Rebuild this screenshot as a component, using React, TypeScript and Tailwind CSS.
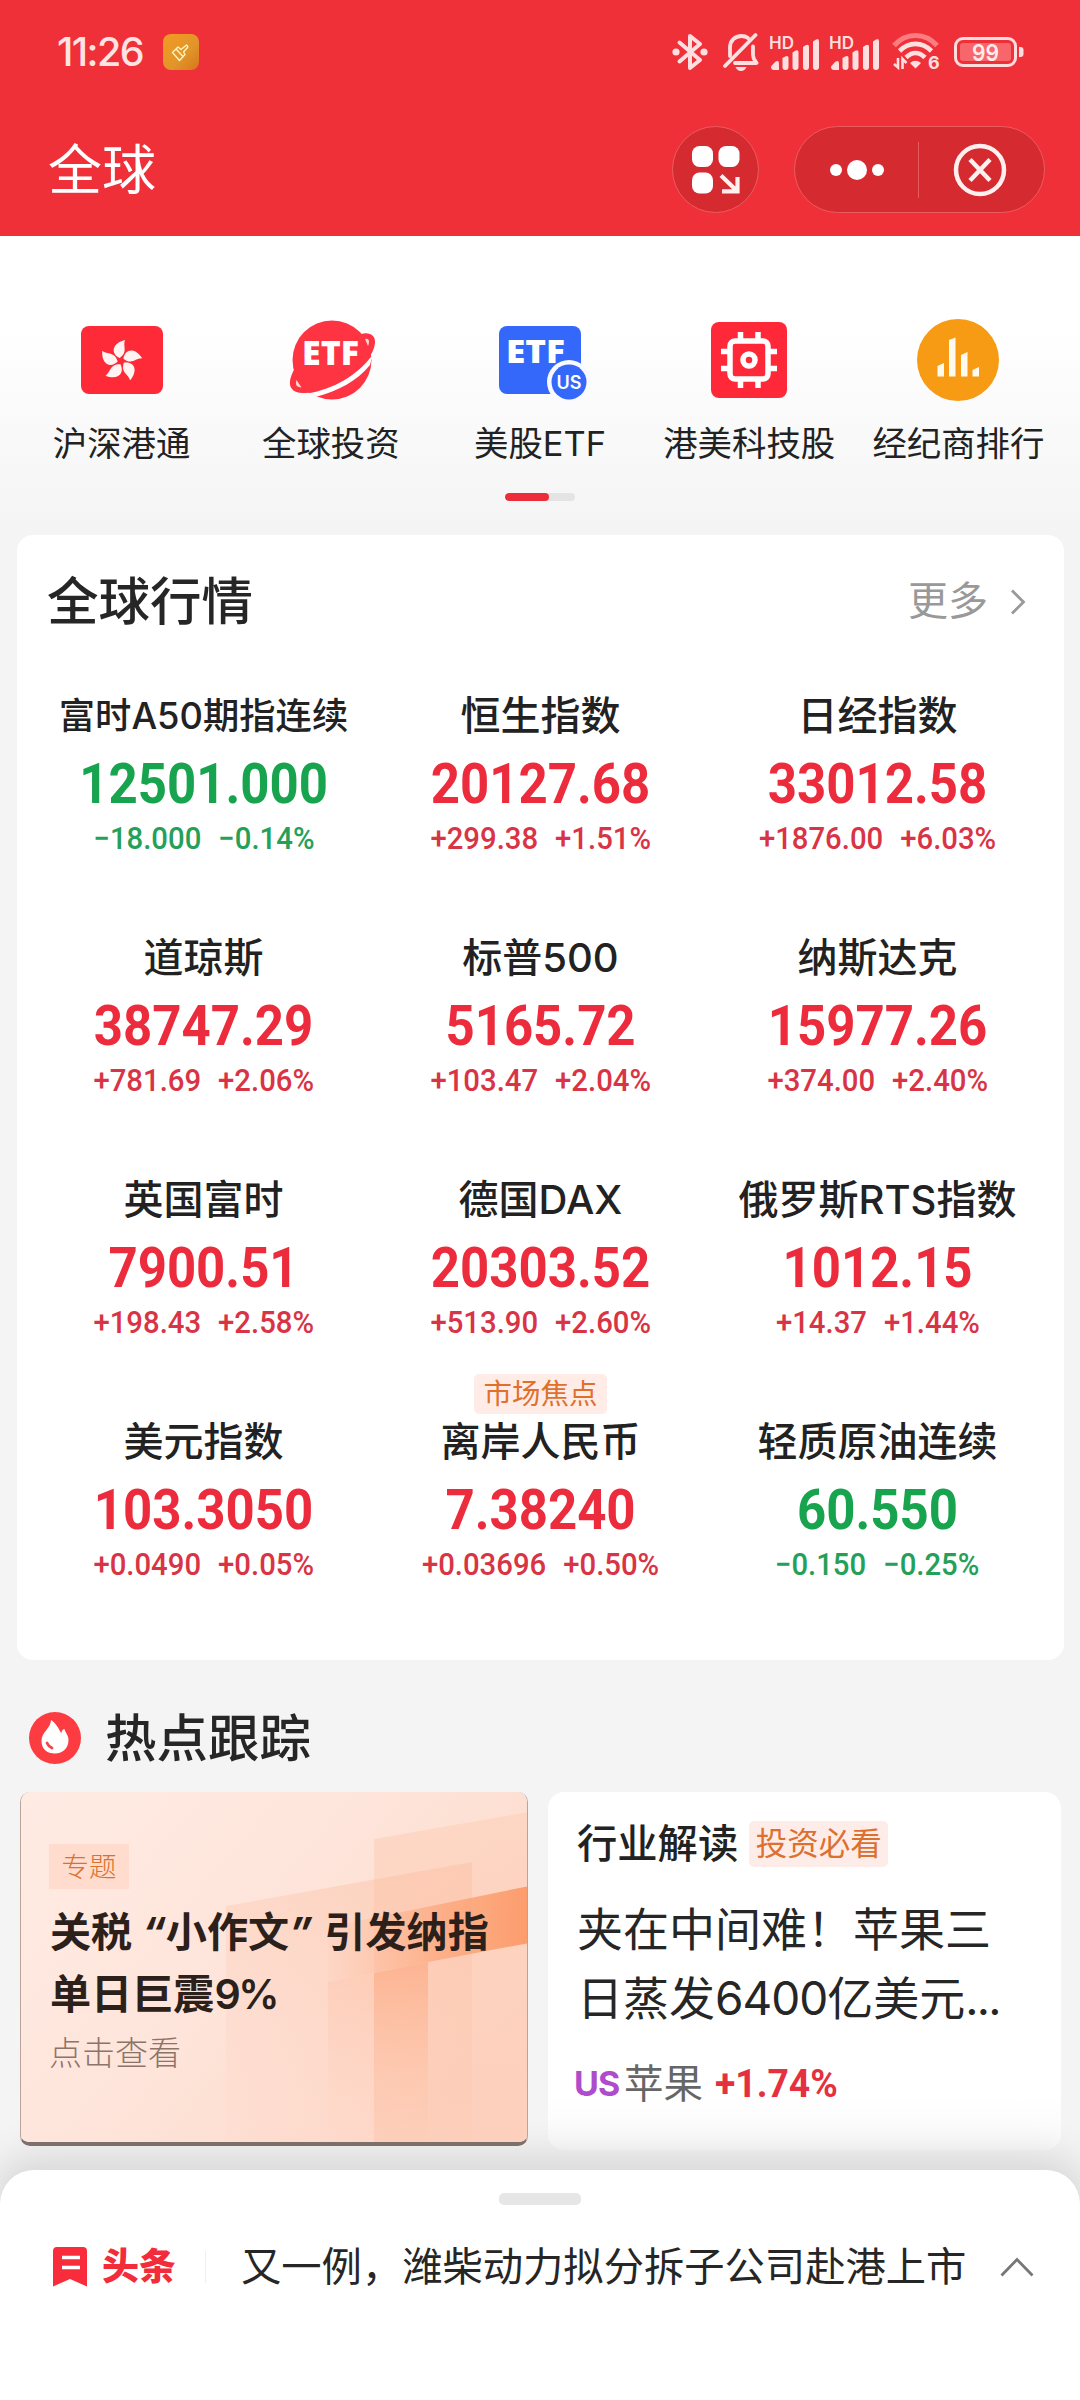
import React from "react";

type Quote = {
  name: string;
  price: string;
  diff: string;
  pct: string;
  down?: boolean;
  small?: boolean;
  tag?: string;
};

const quotes: Quote[] = [
  { name: "富时A50期指连续", price: "12501.000", diff: "-18.000", pct: "-0.14%", down: true, small: true },
  { name: "恒生指数", price: "20127.68", diff: "+299.38", pct: "+1.51%" },
  { name: "日经指数", price: "33012.58", diff: "+1876.00", pct: "+6.03%" },
  { name: "道琼斯", price: "38747.29", diff: "+781.69", pct: "+2.06%" },
  { name: "标普500", price: "5165.72", diff: "+103.47", pct: "+2.04%" },
  { name: "纳斯达克", price: "15977.26", diff: "+374.00", pct: "+2.40%" },
  { name: "英国富时", price: "7900.51", diff: "+198.43", pct: "+2.58%" },
  { name: "德国DAX", price: "20303.52", diff: "+513.90", pct: "+2.60%" },
  { name: "俄罗斯RTS指数", price: "1012.15", diff: "+14.37", pct: "+1.44%" },
  { name: "美元指数", price: "103.3050", diff: "+0.0490", pct: "+0.05%" },
  { name: "离岸人民币", price: "7.38240", diff: "+0.03696", pct: "+0.50%", tag: "市场焦点" },
  { name: "轻质原油连续", price: "60.550", diff: "-0.150", pct: "-0.25%", down: true },
];

function BluetoothIcon() {
  return (
    <svg width="36" height="40" viewBox="0 0 36 40" fill="none" stroke="#ffdedf" strokeWidth="4" strokeLinejoin="round" strokeLinecap="round">
      <path d="M7.500 10.500 28 28 18 36V4l10 8L7.500 29.500" />
      <circle cx="4" cy="20" r="3.600" fill="#ffdedf" stroke="none" />
      <circle cx="32" cy="20" r="3.600" fill="#ffdedf" stroke="none" />
    </svg>
  );
}

function BellOffIcon() {
  return (
    <svg width="36" height="40" viewBox="0 0 36 40" fill="none" stroke="#ffdedf" strokeWidth="3.800" strokeLinecap="round">
      <path d="M7 24V15.500C7 8.500 12 4 18.500 4c2.500 0 4.800.700 6.500 2" />
      <path d="M30 14.500v8.500c0 3.500 1.500 5 3.500 8H12" strokeLinejoin="round" />
      <path d="M32.500 3 2 34" />
      <path d="M12.500 35h11c-1.200 2.600-3 4-5.500 4s-4.300-1.400-5.500-4z" fill="#ffdedf" stroke="none" />
    </svg>
  );
}

function SignalIcon() {
  return (
    <svg width="52" height="40" viewBox="-2 -4 52 40" fill="#ffdedf">
      <text x="-1" y="12.500" textLength="25" lengthAdjust="spacingAndGlyphs" fontFamily="Inter, sans-serif" fontSize="17" fontWeight="600">HD</text>
      <path d="M1 30.500 5 26q4-2.500 4 1.500V34H4q-3 0-3-3.500z" />
      <path d="M12.500 22q6-4 6 0v9q0 3-3 3t-3-3z" />
      <path d="M22.500 16.500q6-4.500 6 0V31q0 3-3 3t-3-3z" />
      <path d="M33 11q6-4.500 6 0v20q0 3-3 3t-3-3z" />
      <path d="M43 5.500q6-5 6 0V31q0 3-3 3t-3-3z" />
    </svg>
  );
}

function WifiIcon() {
  return (
    <svg width="50" height="40" viewBox="0 0 50 40" fill="none" stroke="#ffe0e1" strokeWidth="4.600">
      <path d="M2 13.500C14 0 33 0 45 13.500" stroke="#fc7d80" strokeWidth="5" />
      <path d="M7.500 19C17 9.500 30 9.500 39.500 19" />
      <path d="M14 25.500c6-6 13-6 19 0" />
      <path d="M18 31q5.500-4.500 11 0l-5.500 5.500z" fill="#ffe0e1" stroke="none" />
      <path d="M6 26v9.500L2 32M10.500 37V27l4 4" strokeWidth="2.600" />
      <text x="36" y="36.500" fill="#ffe0e1" stroke="none" fontFamily="Inter, sans-serif" fontSize="18" fontWeight="700">6</text>
    </svg>
  );
}

function BatteryIcon() {
  return (
    <svg width="70" height="30" viewBox="0 0 70 30">
      <rect x="1.500" y="1.500" width="60" height="27" rx="7.500" fill="none" stroke="#ffdcdd" strokeWidth="3" />
      <rect x="6" y="6" width="51" height="18" rx="3" fill="#f7666a" />
      <path d="M65 10h1.500q3 0 3 3v4q0 3-3 3H65z" fill="#ffdcdd" />
      <text x="31.500" y="23.500" textAnchor="middle" textLength="27" lengthAdjust="spacingAndGlyphs" fontFamily="Inter, sans-serif" fontSize="23" fontWeight="600" fill="#ffeaea">99</text>
    </svg>
  );
}

function Header() {
  return (
    <header className="h-[236px] shrink-0 bg-[#ef3038] text-white">
      <div className="flex h-[104px] items-center pl-[57px] pr-[56px]">
        <span className="w-[106px] text-[39.5px] font-medium leading-[40px] tracking-[-1.6px] text-[#ffe3e4]">11:26</span>
        <svg width="36" height="36" viewBox="0 0 36 36">
          <defs>
            <linearGradient id="clean" x1="0" y1="0" x2="1" y2="1">
              <stop offset="0" stopColor="#f49a24" />
              <stop offset="0.6" stopColor="#e0952a" />
              <stop offset="1" stopColor="#d8751c" />
            </linearGradient>
          </defs>
          <rect width="36" height="36" rx="8" fill="url(#clean)" />
          <path d="M9.500 18.500 15 13l3 2.500 5.500-4.500q1.800 1 1 2.500L20.500 18l1.500 2.500-5.500 6zM13 15l7 7.500" fill="none" stroke="#fff4bd" strokeWidth="1.400" strokeLinejoin="round" />
        </svg>
        <div className="ml-auto flex items-center gap-[15px]">
          <BluetoothIcon />
          <BellOffIcon />
        </div>
        <div className="ml-[9px] flex items-center gap-[8px]">
          <SignalIcon />
          <SignalIcon />
        </div>
        <div className="ml-[12px] flex items-center gap-[12px]">
          <WifiIcon />
          <BatteryIcon />
        </div>
      </div>
      <div className="flex h-[131px] items-center pl-[48px] pr-[35px]">
        <h1 className="pt-[2px] text-[54px] font-normal leading-[60px]">全球</h1>
        <button className="ml-auto flex size-[87px] items-center justify-center rounded-full border border-[#ec5b60] bg-[#d42a30]">
          <svg width="48" height="48" viewBox="0 0 48 48" fill="#fff">
            <rect width="21" height="21" rx="7.500" />
            <rect x="26.500" width="21" height="21" rx="7.500" />
            <rect y="26.500" width="21" height="21" rx="7.500" />
            <path d="M29 29.500 45 45M30 45.300H45.500V31" fill="none" stroke="#fff0ef" strokeWidth="4.200" />
          </svg>
        </button>
        <div className="ml-[35px] flex h-[87px] w-[251px] items-center rounded-full border border-[#ec5b60] bg-[#d42a30]">
          <div className="flex w-[123px] items-center justify-center gap-[5px] pl-[1px]">
            <i className="size-[12px] rounded-full bg-white" />
            <i className="size-[20px] rounded-full bg-white" />
            <i className="size-[12px] rounded-full bg-white" />
          </div>
          <i className="h-[56px] w-px bg-[#e75b60]" />
          <svg width="54" height="54" viewBox="0 0 54 54" fill="none" stroke="#fff0ef" strokeWidth="4.500" className="ml-[34px]">
            <circle cx="27" cy="27" r="24" />
            <path d="M17 16.500 37 37.500M37 16.500 17 37.500" />
          </svg>
        </div>
      </div>
    </header>
  );
}

function FlagIcon() {
  return (
    <svg width="90" height="84" viewBox="0 0 90 84">
      <rect x="4" y="8" width="82" height="68" rx="8" fill="#ff2a37" />
      <g transform="translate(44 43)" fill="#fff4f2">
        {[0, 72, 144, 216, 288].map((a) => (
          <path key={a} transform={`rotate(${a})`} d="M-1.500-3C-11-8-8.500-18 4-21 1.500-15 7.500-9-1.500-3z" />
        ))}
      </g>
    </svg>
  );
}

function GlobeIcon() {
  return (
    <svg width="90" height="84" viewBox="0 0 90 84">
      <circle cx="46" cy="42" r="39.500" fill="#fe3443" />
      <path d="M70 18C81 12 90 16 89 25 87 48 44 77 16 75 2 74 1 64 9 50z" fill="#fe3443" />
      <path d="M79 21c4-1 5 2.500 3 7z" fill="#ffd6cf" />
      <path d="M10.500 62c-1.500 5 0 7 5 7.500z" fill="#ffd6cf" />
      <path d="M22 75.500C47 71 71 58 86.500 37L84 47C71 63 52 73 31 78.500z" fill="#fff" />
      <text x="16" y="46.500" textLength="57" lengthAdjust="spacingAndGlyphs" fontFamily="'Open Sans', sans-serif" fontSize="33" fontWeight="800" fill="#fff">ETF</text>
    </svg>
  );
}

function UsEtfIcon() {
  return (
    <svg width="96" height="84" viewBox="0 0 96 84" className="-mr-[6px]">
      <rect x="4" y="8" width="82" height="68" rx="8" fill="#3468fa" />
      <text x="11" y="45" textLength="59" lengthAdjust="spacingAndGlyphs" fontFamily="'Open Sans', sans-serif" fontSize="32.500" fontWeight="800" fill="#fff">ETF</text>
      <circle cx="74" cy="64" r="22" fill="#f8faff" />
      <circle cx="74" cy="64" r="17.500" fill="#3468fa" />
      <text x="74" y="70.500" textAnchor="middle" fontFamily="Inter, sans-serif" fontSize="18" fontWeight="600" fill="#fff">US</text>
    </svg>
  );
}

function ChipIcon() {
  return (
    <svg width="90" height="84" viewBox="0 0 90 84">
      <rect x="7" y="4" width="76" height="76" rx="8" fill="#ff2838" />
      <g fill="none" stroke="#fff" strokeWidth="5.500">
        <rect x="26" y="23" width="38" height="38" rx="5" />
        <circle cx="45" cy="42" r="6" />
        <path d="M36.500 14v9M54 14v9M36.500 61v9M54 61v9M17 33.500h9M17 50.500h9M64 33.500h9M64 50.500h9" />
      </g>
    </svg>
  );
}

function RankIcon() {
  return (
    <svg width="90" height="84" viewBox="0 0 90 84">
      <circle cx="45" cy="42" r="41" fill="#f79a14" />
      <path d="M24.500 48l6.500-3v13.500h-6.500zM36 22l6.500-2.500v39H36zM48 37l6.500-3v24.500H48zM59.500 52l6.500-3v9.500h-6.500z" fill="#fffaf0" />
    </svg>
  );
}

const entries = [
  { label: "沪深港通", icon: <FlagIcon /> },
  { label: "全球投资", icon: <GlobeIcon /> },
  { label: "美股ETF", icon: <UsEtfIcon /> },
  { label: "港美科技股", icon: <ChipIcon /> },
  { label: "经纪商排行", icon: <RankIcon /> },
];

function Entries() {
  return (
    <nav className="h-[299px] shrink-0 bg-linear-to-b from-white from-30% to-[#f4f4f4] px-[17px] pt-[82px]">
      <div className="grid grid-cols-5">
        {entries.map((e) => (
          <div key={e.label} className="flex flex-col items-center">
            {e.icon}
            <span className="mt-[22px] whitespace-nowrap text-[34.4px] leading-[40px] text-[#222]">{e.label}</span>
          </div>
        ))}
      </div>
      <div className="mx-auto mt-[29px] h-[8px] w-[70px] overflow-hidden rounded-full bg-[#e4e4e4]">
        <div className="h-full w-[44px] rounded-full bg-[#ec2c3a]" />
      </div>
    </nav>
  );
}

function QuoteCell({ q }: { q: Quote }) {
  const tone = q.down ? "text-[#18a34f]" : "text-[#ec2c3d]";
  const sub = q.down ? "text-[#25a058]" : "text-[#d93445]";
  return (
    <div className="relative flex h-[242px] flex-col items-center">
      {q.tag && (
        <span className="absolute -top-[43px] flex h-[40px] w-[133px] items-center justify-center rounded-[5px] bg-[#ffece6] text-[28.500px] leading-[36px] text-[#e0702c]">
          {q.tag}
        </span>
      )}
      <span className={`whitespace-nowrap font-medium leading-[50px] text-[#222] ${q.small ? "text-[36.300px]" : "text-[40px]"}`}>{q.name}</span>
      <span className={`mt-[13px] block origin-center scale-x-[0.91] font-['Roboto'] text-[56px] font-bold leading-[60px] ${tone}`}>{q.price}</span>
      <span className={`mt-[7px] flex scale-x-[0.945] gap-[18px] whitespace-nowrap font-['Roboto'] text-[31px] font-medium leading-[36px] ${sub}`}>
        <span>{q.diff.replace("-", "−")}</span>
        <span>{q.pct.replace("-", "−")}</span>
      </span>
    </div>
  );
}

function Markets() {
  return (
    <section className="mx-[17px] h-[1125px] w-[1047px] shrink-0 rounded-[16px] bg-white px-[18px] pt-[36px]">
      <div className="flex h-[60px] items-center justify-between pl-[12px] pr-[20px]">
        <h2 className="text-[51.500px] font-medium leading-[60px] text-[#262626]">全球行情</h2>
        <span className="flex items-center text-[40px] font-normal leading-[50px] text-[#999]">
          更多
          <svg width="16" height="26" viewBox="0 0 16 26" fill="none" stroke="#999" strokeWidth="2.800" className="ml-[22px] mt-[2px]">
            <path d="M2 1.500 13.500 13 2 24.500" />
          </svg>
        </span>
      </div>
      <div className="mt-[60px] grid grid-cols-3">
        {quotes.map((q) => (
          <QuoteCell key={q.name} q={q} />
        ))}
      </div>
    </section>
  );
}

function TopicArt() {
  return (
    <svg width="508" height="353" viewBox="0 0 508 353" className="absolute inset-0">
      <defs>
        <linearGradient id="base" x1="0" y1="0" x2="1" y2="0.600">
          <stop offset="0" stopColor="#ffebe3" />
          <stop offset="0.500" stopColor="#fee5db" />
          <stop offset="1" stopColor="#fdd9ca" />
        </linearGradient>
        <linearGradient id="pa" x1="0" y1="0" x2="0" y2="1">
          <stop offset="0" stopColor="#fdceb7" stopOpacity="0.550" />
          <stop offset="1" stopColor="#fcc5ab" stopOpacity="0.450" />
        </linearGradient>
        <linearGradient id="pb" x1="0.200" y1="0" x2="0" y2="1">
          <stop offset="0" stopColor="#fcb898" stopOpacity="0.350" />
          <stop offset="1" stopColor="#fdc8b2" stopOpacity="0.030" />
        </linearGradient>
        <linearGradient id="pc" x1="0" y1="0" x2="1" y2="0">
          <stop offset="0" stopColor="#fdb592" stopOpacity="0.050" />
          <stop offset="0.550" stopColor="#fca67a" stopOpacity="0.750" />
          <stop offset="1" stopColor="#fc9c6c" />
        </linearGradient>
        <linearGradient id="pd" x1="0" y1="0" x2="0" y2="1">
          <stop offset="0" stopColor="#fca77e" stopOpacity="0.650" />
          <stop offset="1" stopColor="#fdc0a4" stopOpacity="0.050" />
        </linearGradient>
      </defs>
      <rect width="508" height="353" fill="url(#base)" />
      <path d="M353 47 508 20V353H353z" fill="url(#pa)" />
      <path d="M205 114 451 70V353H205z" fill="url(#pb)" />
      <path d="M307 135 508 94V151L407 170 307 190z" fill="url(#pc)" />
      <path d="M307 190 353 181V353H307z" fill="url(#pd)" opacity="0.300" />
      <path d="M353 181 407 170V353H353z" fill="url(#pd)" />
    </svg>
  );
}

function Hot() {
  return (
    <section className="shrink-0">
      <div className="flex h-[132px] items-center pl-[29px] pt-[24px]">
        <svg width="52" height="52" viewBox="0 0 52 52">
          <circle cx="26" cy="26" r="26" fill="#fc3c41" />
          <path d="M22 8c0 8-9.500 12-9.500 21C12.500 37 18 41.500 26 41.500S39.500 36 39.500 28c0-5-3-7-4-11-2 .500-3 2-3.200 4.500C30 17 27 11 22 8z" fill="#fff" />
          <path d="M18 31c1 2.500 3 4 5 5" stroke="#f0474a" strokeWidth="2.800" fill="none" strokeLinecap="round" />
        </svg>
        <h2 className="ml-[24px] text-[51.500px] font-medium leading-[60px] text-[#262626]">热点跟踪</h2>
      </div>
      <div className="flex items-start pl-[20px]">
        <article className="relative h-[354px] w-[508px] overflow-hidden rounded-[10px] border-x border-b-4 border-x-[#b9a39a] border-b-[#7d706a]">
          <TopicArt />
          <div className="relative flex flex-col items-start pl-[28px] pt-[52px]">
            <span className="flex h-[45px] w-[80px] items-center justify-center bg-[#ffdccd] text-[27.500px] font-light leading-[30px] text-[#db702f]">专题</span>
            <h3 className="mt-[12px] whitespace-nowrap pl-px text-[41.100px] font-bold leading-[62px] text-[#2c201b]">
              关税 <i>“</i>小作文<i>”</i><span className="tracking-[2px]"> </span>引发纳指
              <br />
              单日巨震<span className="font-semibold tracking-[-2.500px]">9%</span>
            </h3>
            <span className="mt-[8px] text-[33px] font-light leading-[40px] text-[#8d7469]">点击查看</span>
          </div>
        </article>
        <article className="ml-[20px] h-[358px] w-[513px] rounded-[16px] bg-linear-to-b from-white from-85% to-[#f9f9f9] pl-[29px] pt-[27px]">
          <div className="flex items-center">
            <h3 className="text-[40.300px] font-medium leading-[50px] text-[#222]">行业解读</h3>
            <span className="ml-[11px] flex h-[46px] w-[139px] items-center justify-center rounded-[5px] bg-[#feece8] text-[31.500px] leading-[40px] text-[#dd702e]">投资必看</span>
          </div>
          <p className="mt-[26px] whitespace-nowrap text-[46px] leading-[69px] text-[#262626]">
            夹在中间难！苹果三
            <br />
            日蒸发<span className="tracking-[-1px]">6400</span>亿美元<span className="tracking-[-1.800px]">...</span>
          </p>
          <div className="-ml-[3px] mt-[26px] flex items-center leading-[50px]">
            <span className="w-[50px] text-[34px] font-bold tracking-[-1px] text-[#ae4ccb]">US</span>
            <span className="text-[39.500px] font-normal text-[#666]">苹果</span>
            <span className="ml-[12px] origin-left scale-x-[0.98] font-['Roboto'] text-[38px] font-bold text-[#e43040]">+1.74%</span>
          </div>
        </article>
      </div>
    </section>
  );
}

function Headline() {
  return (
    <footer className="mt-auto h-[230px] shrink-0 rounded-t-[34px] bg-white pt-[23px] shadow-[0_-8px_40px_6px_rgba(0,0,0,0.12)]">
      <div className="mx-auto h-[12px] w-[82px] rounded-[5px] bg-[#e6e6e6]" />
      <div className="mt-[32px] flex h-[60px] items-center pl-[53px]">
        <svg width="34" height="40" viewBox="0 0 34 40">
          <path d="M4 0h26q4 0 4 4v35.500L17 32 0 39.500V4q0-4 4-4z" fill="#f92c3c" />
          <path d="M9 10.500h18M9 20.500h18" stroke="#fff" strokeWidth="3.600" />
        </svg>
        <span className="ml-[15px] text-[37px] font-black leading-[50px] text-[#f32c3c]">头条</span>
        <i className="ml-[29px] h-[32px] w-px bg-[#efefef]" />
        <span className="ml-[35px] whitespace-nowrap text-[40.300px] leading-[50px] text-[#262626]">又一例，潍柴动力拟分拆子公司赴港上市</span>
        <svg width="34" height="20" viewBox="0 0 34 20" fill="none" stroke="#777" strokeWidth="2.800" className="ml-[34px]">
          <path d="M1.500 18.500 17 2.500 32.500 18.500" />
        </svg>
      </div>
    </footer>
  );
}

export default function App() {
  return (
    <div className="flex h-[2400px] w-[1080px] flex-col overflow-hidden bg-[#f4f4f4] font-['Inter','Noto_Sans_CJK_SC',sans-serif]">
      <Header />
      <Entries />
      <Markets />
      <Hot />
      <Headline />
    </div>
  );
}
